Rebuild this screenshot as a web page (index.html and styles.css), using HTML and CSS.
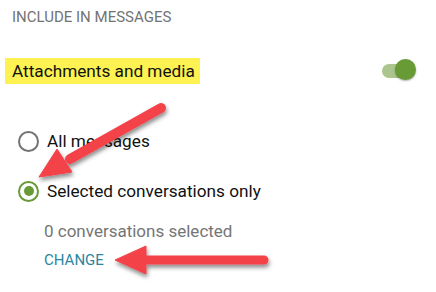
FILE: index.html
```html
<!DOCTYPE html>
<html>
<head>
<meta charset="utf-8">
<link rel="stylesheet" href="styles.css">
</head>
<body>
<div class="page">
  <div class="section-title">INCLUDE IN MESSAGES</div>
  <div class="toggle-row">
    <span class="highlight">Attachments and media</span>
    <span class="switch"><span class="track"></span><span class="knob"></span></span>
  </div>
  <div class="options">
    <div class="radio-row">
      <span class="radio"></span>
      <span class="label">All messages</span>
    </div>
    <div class="radio-row">
      <span class="radio checked"></span>
      <span class="label">Selected conversations only</span>
    </div>
    <div class="sub">
      <div class="count">0 conversations selected</div>
      <div class="change">CHANGE</div>
    </div>
  </div>
  <svg class="arrows" width="436" height="292" viewBox="0 0 436 292">
    <defs>
      <filter id="sh" x="-20%" y="-20%" width="140%" height="160%">
        <feDropShadow dx="1" dy="3" stdDeviation="2" flood-color="#000" flood-opacity="0.45"/>
      </filter>
    </defs>
    <g filter="url(#sh)" fill="#f4424a" stroke="#f4424a">
      <line x1="161" y1="108" x2="70" y2="159" stroke-width="10" stroke-linecap="round"/>
      <polygon points="39,177 57,149 72,172" stroke-width="1" stroke-linejoin="round"/>
      <line x1="264" y1="260" x2="140" y2="260" stroke-width="9" stroke-linecap="round"/>
      <polygon points="115,260 146,246 146,274" stroke-width="1" stroke-linejoin="round"/>
    </g>
  </svg>
</div>
</body>
</html>
```
FILE: styles.css
```css
html, body {
  margin: 0;
  padding: 0;
  background: #ffffff;
}
.page {
  position: relative;
  width: 436px;
  height: 292px;
  overflow: hidden;
  font-family: Roboto, "Liberation Sans", sans-serif;
}
.section-title {
  padding: 7px 0 0 12px;
  font-size: 15px;
  line-height: 20px;
  color: #737373;
}
.toggle-row {
  display: flex;
  align-items: center;
  justify-content: space-between;
  margin-top: 31px;
  padding: 0 20px 0 5px;
  height: 26px;
}
.highlight {
  background: #fdf252;
  color: #111;
  font-size: 17.2px;
  line-height: 26px;
  padding: 0 5px 0 7px;
}
.switch {
  position: relative;
  width: 34px;
  height: 22px;
  display: block;
}
.track {
  position: absolute;
  left: 0;
  top: 4px;
  width: 28px;
  height: 14px;
  border-radius: 7px;
  background: #aac68d;
}
.knob {
  position: absolute;
  right: 0;
  top: -1px;
  width: 21px;
  height: 21px;
  border-radius: 50%;
  background: #689a36;
  box-shadow: 0 1px 2px rgba(0,0,0,0.35);
}
.options {
  padding: 0 0 0 18px;
  margin-top: 45px;
}
.radio-row {
  display: flex;
  align-items: center;
  gap: 8px;
  height: 24px;
  margin-bottom: 26px;
}
.radio {
  width: 17px;
  height: 17px;
  border: 2px solid #737373;
  border-radius: 50%;
  box-sizing: content-box;
  display: flex;
  align-items: center;
  justify-content: center;
}
.radio.checked {
  border-color: #689a36;
}
.radio.checked::after {
  content: "";
  width: 10px;
  height: 10px;
  border-radius: 50%;
  background: #689a36;
}
.label {
  font-size: 17.2px;
  color: #111;
}
.sub {
  margin-top: -9px;
  padding-left: 26px;
}
.count {
  font-size: 17px;
  line-height: 22px;
  color: #757575;
}
.change {
  margin-top: 8px;
  font-size: 15px;
  line-height: 20px;
  color: #2b86a0;
}
.arrows {
  position: absolute;
  left: 0;
  top: 0;
}
```
